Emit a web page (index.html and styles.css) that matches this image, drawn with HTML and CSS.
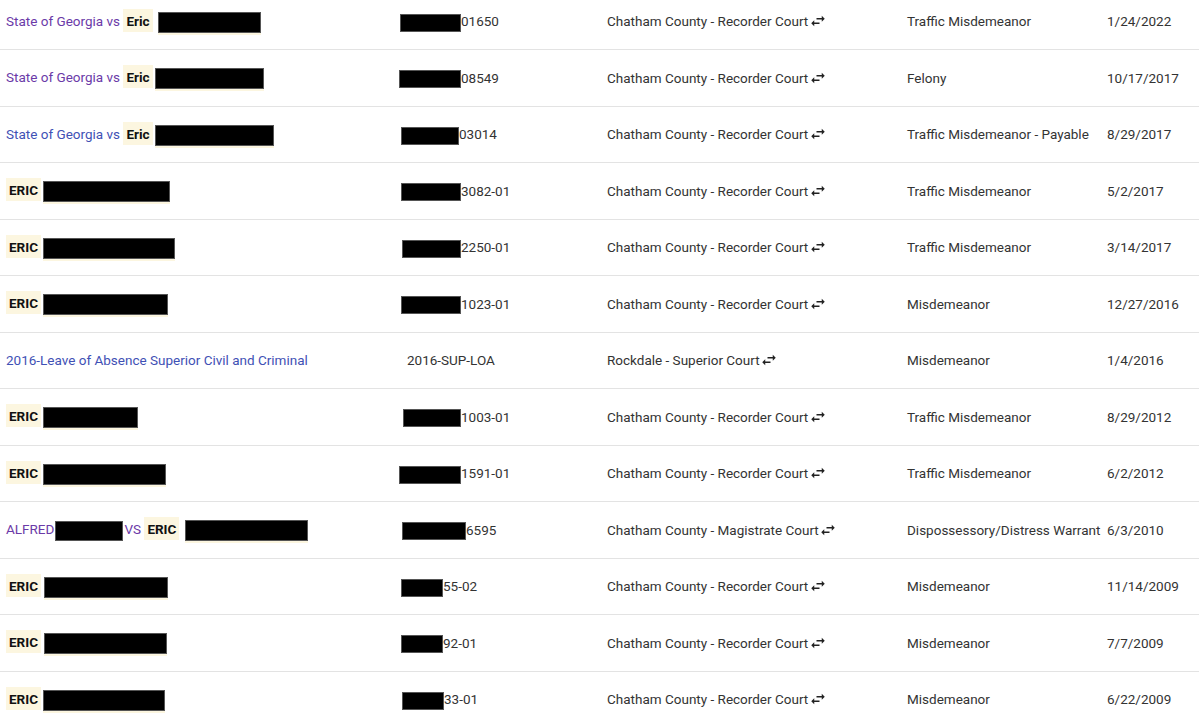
FILE: index.html
```html
<!DOCTYPE html>
<html>
<head>
<meta charset="utf-8">
<link rel="stylesheet" href="styles.css">
</head>
<body>
<div class="results">
<table class="cases">
  <colgroup><col class="c1"><col class="c2"><col class="c3"><col class="c4"><col class="c5"></colgroup>
  <tbody>
    <tr>
      <td><a class="link visited">State of Georgia vs</a> <span class="hl">Eric</span> <span class="rd name" style="width:103px"></span></td>
      <td class="num"><span class="rd" style="width:61px"></span>01650</td>
      <td>Chatham County - Recorder Court <svg class="ic" viewBox="0 0 24 24"><path d="M6.99 11L3 15l3.99 4v-3H14v-2H6.99v-3zM21 9l-3.99-4v3H10v2h7.01v3L21 9z"/></svg></td>
      <td>Traffic Misdemeanor</td>
      <td>1/24/2022</td>
    </tr>
    <tr>
      <td><a class="link visited">State of Georgia vs</a> <span class="hl">Eric</span><span class="rd name" style="width:109px"></span></td>
      <td class="num"><span class="rd" style="width:62px;margin-left:-1px"></span>08549</td>
      <td>Chatham County - Recorder Court <svg class="ic" viewBox="0 0 24 24"><path d="M6.99 11L3 15l3.99 4v-3H14v-2H6.99v-3zM21 9l-3.99-4v3H10v2h7.01v3L21 9z"/></svg></td>
      <td>Felony</td>
      <td>10/17/2017</td>
    </tr>
    <tr>
      <td><a class="link">State of Georgia vs</a> <span class="hl">Eric</span><span class="rd name" style="width:119px"></span></td>
      <td class="num"><span class="rd" style="width:58px;margin-left:1px"></span>03014</td>
      <td>Chatham County - Recorder Court <svg class="ic" viewBox="0 0 24 24"><path d="M6.99 11L3 15l3.99 4v-3H14v-2H6.99v-3zM21 9l-3.99-4v3H10v2h7.01v3L21 9z"/></svg></td>
      <td>Traffic Misdemeanor - Payable</td>
      <td>8/29/2017</td>
    </tr>
    <tr>
      <td><span class="hl">ERIC</span><span class="rd name" style="width:127px"></span></td>
      <td class="num"><span class="rd" style="width:60px;margin-left:1px"></span>3082-01</td>
      <td>Chatham County - Recorder Court <svg class="ic" viewBox="0 0 24 24"><path d="M6.99 11L3 15l3.99 4v-3H14v-2H6.99v-3zM21 9l-3.99-4v3H10v2h7.01v3L21 9z"/></svg></td>
      <td>Traffic Misdemeanor</td>
      <td>5/2/2017</td>
    </tr>
    <tr>
      <td><span class="hl">ERIC</span><span class="rd name" style="width:132px"></span></td>
      <td class="num"><span class="rd" style="width:59px;margin-left:2px"></span>2250-01</td>
      <td>Chatham County - Recorder Court <svg class="ic" viewBox="0 0 24 24"><path d="M6.99 11L3 15l3.99 4v-3H14v-2H6.99v-3zM21 9l-3.99-4v3H10v2h7.01v3L21 9z"/></svg></td>
      <td>Traffic Misdemeanor</td>
      <td>3/14/2017</td>
    </tr>
    <tr>
      <td><span class="hl">ERIC</span><span class="rd name" style="width:125px"></span></td>
      <td class="num"><span class="rd" style="width:60px;margin-left:1px"></span>1023-01</td>
      <td>Chatham County - Recorder Court <svg class="ic" viewBox="0 0 24 24"><path d="M6.99 11L3 15l3.99 4v-3H14v-2H6.99v-3zM21 9l-3.99-4v3H10v2h7.01v3L21 9z"/></svg></td>
      <td>Misdemeanor</td>
      <td>12/27/2016</td>
    </tr>
    <tr>
      <td><a class="link">2016-Leave of Absence Superior Civil and Criminal</a></td>
      <td class="plain">2016-SUP-LOA</td>
      <td>Rockdale - Superior Court <svg class="ic" viewBox="0 0 24 24"><path d="M6.99 11L3 15l3.99 4v-3H14v-2H6.99v-3zM21 9l-3.99-4v3H10v2h7.01v3L21 9z"/></svg></td>
      <td>Misdemeanor</td>
      <td>1/4/2016</td>
    </tr>
    <tr>
      <td><span class="hl">ERIC</span><span class="rd name" style="width:95px"></span></td>
      <td class="num"><span class="rd" style="width:58px;margin-left:3px"></span>1003-01</td>
      <td>Chatham County - Recorder Court <svg class="ic" viewBox="0 0 24 24"><path d="M6.99 11L3 15l3.99 4v-3H14v-2H6.99v-3zM21 9l-3.99-4v3H10v2h7.01v3L21 9z"/></svg></td>
      <td>Traffic Misdemeanor</td>
      <td>8/29/2012</td>
    </tr>
    <tr>
      <td><span class="hl">ERIC</span><span class="rd name" style="width:123px"></span></td>
      <td class="num"><span class="rd" style="width:62px;margin-left:-1px"></span>1591-01</td>
      <td>Chatham County - Recorder Court <svg class="ic" viewBox="0 0 24 24"><path d="M6.99 11L3 15l3.99 4v-3H14v-2H6.99v-3zM21 9l-3.99-4v3H10v2h7.01v3L21 9z"/></svg></td>
      <td>Traffic Misdemeanor</td>
      <td>6/2/2012</td>
    </tr>
    <tr>
      <td><a class="link visited">ALFRED<span class="rd inl" style="width:68px"></span>VS</a> <span class="hl">ERIC</span> <span class="rd name" style="width:123px"></span></td>
      <td class="num"><span class="rd" style="width:64px;margin-left:2px"></span>6595</td>
      <td>Chatham County - Magistrate Court <svg class="ic" viewBox="0 0 24 24"><path d="M6.99 11L3 15l3.99 4v-3H14v-2H6.99v-3zM21 9l-3.99-4v3H10v2h7.01v3L21 9z"/></svg></td>
      <td>Dispossessory/Distress Warrant</td>
      <td>6/3/2010</td>
    </tr>
    <tr>
      <td><span class="hl">ERIC</span><span class="rd name" style="width:124px;margin-left:3px"></span></td>
      <td class="num"><span class="rd" style="width:42px;margin-left:1px"></span>55-02</td>
      <td>Chatham County - Recorder Court <svg class="ic" viewBox="0 0 24 24"><path d="M6.99 11L3 15l3.99 4v-3H14v-2H6.99v-3zM21 9l-3.99-4v3H10v2h7.01v3L21 9z"/></svg></td>
      <td>Misdemeanor</td>
      <td>11/14/2009</td>
    </tr>
    <tr>
      <td><span class="hl">ERIC</span><span class="rd name" style="width:123px;margin-left:3px"></span></td>
      <td class="num"><span class="rd" style="width:42px;margin-left:1px"></span>92-01</td>
      <td>Chatham County - Recorder Court <svg class="ic" viewBox="0 0 24 24"><path d="M6.99 11L3 15l3.99 4v-3H14v-2H6.99v-3zM21 9l-3.99-4v3H10v2h7.01v3L21 9z"/></svg></td>
      <td>Misdemeanor</td>
      <td>7/7/2009</td>
    </tr>
    <tr>
      <td><span class="hl">ERIC</span><span class="rd name" style="width:122px;margin-left:2px"></span></td>
      <td class="num"><span class="rd" style="width:42px;margin-left:2px"></span>33-01</td>
      <td>Chatham County - Recorder Court <svg class="ic" viewBox="0 0 24 24"><path d="M6.99 11L3 15l3.99 4v-3H14v-2H6.99v-3zM21 9l-3.99-4v3H10v2h7.01v3L21 9z"/></svg></td>
      <td>Misdemeanor</td>
      <td>6/22/2009</td>
    </tr>
  </tbody>
</table>
</div>
</body>
</html>
```
FILE: styles.css
```css
html, body {
  margin: 0;
  padding: 0;
  background: #ffffff;
}
body {
  font-family: Roboto, "Liberation Sans", Arial, sans-serif;
  font-size: 13.5px;
  color: #333333;
  overflow: hidden;
}
.results {
  margin-top: -6.5px;
}
.cases {
  width: 1199px;
  border-collapse: collapse;
  table-layout: fixed;
}
.c1 { width: 400px; }
.c2 { width: 200px; }
.c3 { width: 300px; }
.c4 { width: 200px; }
.c5 { width: 99px; }
.cases td {
  height: 55.5px;
  padding: 0 0 0 7px;
  vertical-align: middle;
  white-space: nowrap;
  border-bottom: 1px solid #e3e3e3;
}
.cases td:first-child {
  padding-left: 6px;
}
.cases td.num {
  padding-left: 0;
}
.link {
  color: #3f51b5;
  text-decoration: none;
  cursor: pointer;
}
.link.visited {
  color: #6b3aa8;
}
.hl {
  background: #fcf6e0;
  color: #111111;
  font-weight: 700;
  padding: 4px 3px 3px;
}
.rd {
  display: inline-block;
  height: 18px;
  margin-top: -3px;
  margin-bottom: -3px;
  background: #000000;
  border: 1px solid #555555;
  box-sizing: border-box;
  vertical-align: middle;
}
.rd.name {
  height: 21px;
  margin-left: 2px;
  box-shadow: 0 2px 0 #fcf6e0;
}
.rd.inl {
  height: 20px;
  margin-left: 1px;
  margin-right: 1px;
}
.ic {
  width: 18px;
  height: 18px;
  fill: #222222;
  vertical-align: -1px;
  margin: -4px 0 -3px -3px;
}
```
